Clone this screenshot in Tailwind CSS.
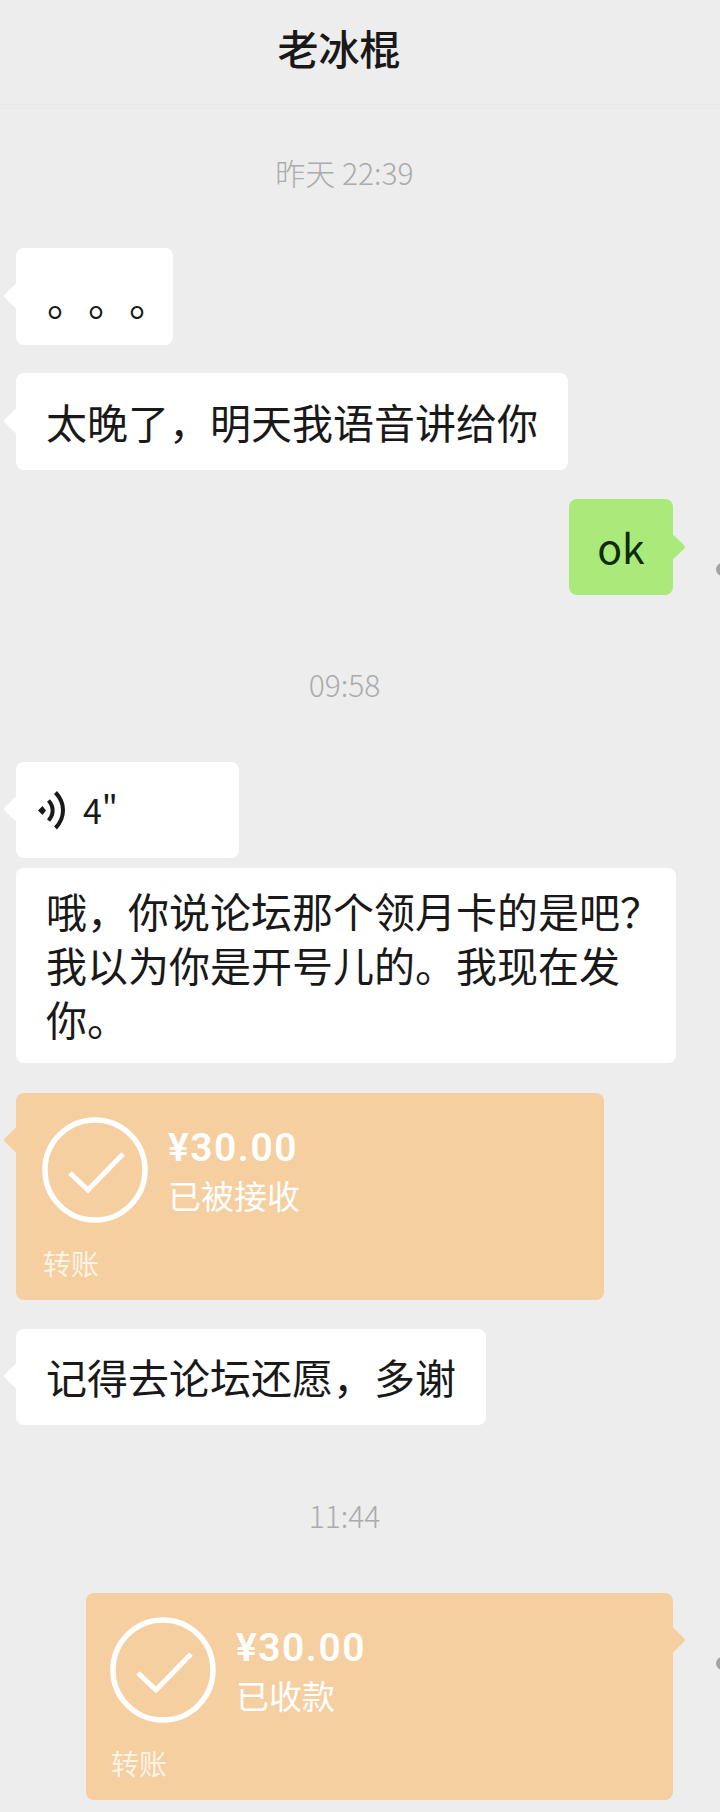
<!DOCTYPE html>
<html lang="zh-CN">
  <head>
    <meta charset="UTF-8" />
    <meta name="viewport" content="width=device-width, initial-scale=1.0" />
    <title>老冰棍</title>
    <script src="https://cdn.jsdelivr.net/npm/@tailwindcss/browser@4"></script>
  </head>
  <body class="bg-[#ededed] w-[720px] h-[1812px] overflow-hidden font-['Noto_Sans_CJK_SC','Noto_Sans',sans-serif] text-[#191919]">
    <!-- header -->
    <header class="h-[105px] border-b border-[#e6e6e6] flex items-center justify-center pb-[10px] pr-[42px]">
      <h1 class="text-[41px] leading-none font-medium">老冰棍</h1>
    </header>

    <main class="relative px-4">
      <div class="h-[68px] mt-[34px] pb-[2px] pr-[31px] flex items-center justify-center text-[30px] font-light text-[#ababab]">昨天 22:39</div>

      <!-- 昨天 -->
      <div class="relative w-[157px] h-[97px] mt-[41px] bg-white rounded-lg">
        <span class="absolute -left-[9px] top-[39px] size-[18px] rotate-45 rounded-[2px] bg-white"></span>
        <div class="absolute left-[31px] top-[20px] flex text-[41px] leading-[60px]">
          <span class="w-[41px]">。</span>
          <span class="w-[41px]">。</span>
          <span class="w-[41px]">。</span>
        </div>
      </div>

      <div class="relative w-[552px] h-[97px] mt-[28px] bg-white rounded-lg flex items-center pl-[30px]">
        <span class="absolute -left-[9px] top-[39px] size-[18px] rotate-45 rounded-[2px] bg-white"></span>
        <span class="text-[41px] whitespace-nowrap">太晚了，明天我语音讲给你</span>
      </div>

      <div class="flex justify-end pr-[31px] mt-[29px]">
        <div class="relative w-[104px] h-[96px] bg-[#a9ea7a] rounded-lg flex items-center justify-center">
          <span class="absolute -right-[9px] top-[39px] size-[18px] rotate-45 rounded-[2px] bg-[#a9ea7a]"></span>
          <span class="relative text-[41px] text-[#0f2a06]">ok</span>
        </div>
      </div>
      <span class="absolute right-[-9px] top-[424px] size-[13px] rounded-full bg-[#a3a3a3]"></span>

      <div class="h-[68px] mt-[56px] pb-[2px] pr-[31px] flex items-center justify-center text-[30px] font-light text-[#ababab]">09:58</div>

      <!-- 09:58 -->
      <div class="relative w-[223px] h-[96px] mt-[43px] bg-white rounded-lg flex items-center pl-[21px] gap-[18px]">
        <span class="absolute -left-[9px] top-[38px] size-[18px] rotate-45 rounded-[2px] bg-white"></span>
        <svg class="relative w-[28px] h-[40px]" viewBox="0 0 28 40" fill="none" stroke="#191919" stroke-width="4">
          <path d="M1 20.500l4.500-4.500 3.500 4.500-3.500 4.500z" fill="#191919" stroke="none" />
          <path d="M11.500 10.500c5.500 6 5.500 14 0 20" />
          <path d="M18.500 2.500c10 10.500 10 25 0 35.500" />
        </svg>
        <span class="text-[34px] leading-none">4"</span>
      </div>

      <div class="w-[660px] h-[195px] mt-[10px] bg-white rounded-lg pl-[30px] pt-[15px] text-[41px] leading-[54px] whitespace-nowrap">
        哦，你说论坛那个领月卡的是吧？<br />我以为你是开号儿的。我现在发<br />你。
      </div>

      <!-- transfer in -->
      <div class="relative w-[588px] h-[207px] mt-[30px] bg-[#f5cfa0] rounded-lg text-white">
        <span class="absolute -left-[9px] top-[38px] size-[18px] rotate-45 rounded-[2px] bg-[#f5cfa0]"></span>
        <div class="relative flex gap-[20px] pl-[26px] pt-[24px]">
          <svg class="size-[106px]" viewBox="0 0 106 106" fill="none" stroke="#ffffff" stroke-width="5.500">
            <circle cx="53" cy="53" r="50" />
            <path d="M28 56l18 17 35-36" stroke-width="5" />
          </svg>
          <div class="pt-[5px]">
            <div class="text-[39px] leading-[52px] font-semibold font-['Roboto',sans-serif] tracking-[1.500px]">¥30.00</div>
            <div class="text-[33px] leading-[46px] -mt-[2px]">已被接收</div>
          </div>
        </div>
        <div class="absolute left-[27px] top-[152px] text-[28px] leading-[36px] text-white/75">转账</div>
      </div>

      <div class="relative w-[470px] h-[96px] mt-[29px] bg-white rounded-lg flex items-center pl-[30px]">
        <span class="absolute -left-[9px] top-[38px] size-[18px] rotate-45 rounded-[2px] bg-white"></span>
        <span class="text-[41px] whitespace-nowrap">记得去论坛还愿，多谢</span>
      </div>

      <div class="h-[68px] mt-[57px] pb-[2px] pr-[31px] flex items-center justify-center text-[30px] font-light text-[#ababab]">11:44</div>

      <!-- transfer out -->
      <div class="flex justify-end pr-[31px] mt-[43px]">
        <div class="relative w-[587px] h-[207px] bg-[#f5cfa0] rounded-lg text-white">
          <span class="absolute -right-[9px] top-[38px] size-[18px] rotate-45 rounded-[2px] bg-[#f5cfa0]"></span>
          <div class="relative flex gap-[20px] pl-[24px] pt-[24px]">
            <svg class="size-[106px]" viewBox="0 0 106 106" fill="none" stroke="#ffffff" stroke-width="5.500">
              <circle cx="53" cy="53" r="50" />
              <path d="M28 56l18 17 35-36" stroke-width="5" />
            </svg>
            <div class="pt-[5px]">
              <div class="text-[39px] leading-[52px] font-semibold font-['Roboto',sans-serif] tracking-[1.500px]">¥30.00</div>
              <div class="text-[33px] leading-[46px] -mt-[2px]">已收款</div>
            </div>
          </div>
          <div class="absolute left-[25px] top-[152px] text-[28px] leading-[36px] text-white/75">转账</div>
        </div>
      </div>
      <span class="absolute right-[-9px] top-[1518px] size-[13px] rounded-full bg-[#a3a3a3]"></span>
    </main>
  </body>
</html>
